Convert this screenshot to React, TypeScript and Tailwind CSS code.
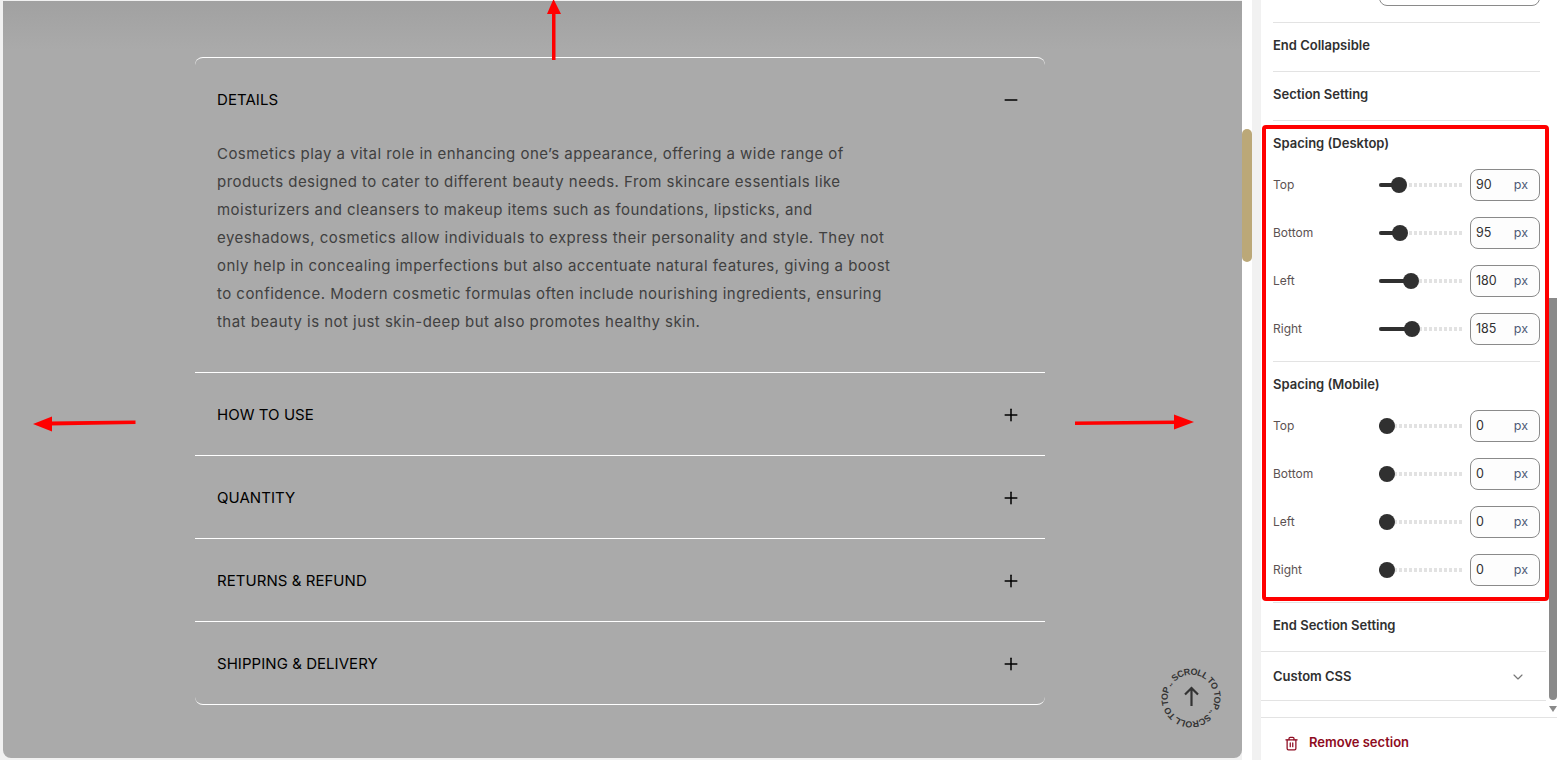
import { ChevronDown, Minus, Plus, Trash2 } from "lucide-react";

const BODY_LINES = [
  "Cosmetics play a vital role in enhancing one’s appearance, offering a wide range of",
  "products designed to cater to different beauty needs. From skincare essentials like",
  "moisturizers and cleansers to makeup items such as foundations, lipsticks, and",
  "eyeshadows, cosmetics allow individuals to express their personality and style. They not",
  "only help in concealing imperfections but also accentuate natural features, giving a boost",
  "to confidence. Modern cosmetic formulas often include nourishing ingredients, ensuring",
  "that beauty is not just skin-deep but also promotes healthy skin.",
];

const COLLAPSED = ["HOW TO USE", "QUANTITY", "RETURNS & REFUND", "SHIPPING & DELIVERY"];

const DESKTOP = [
  { label: "Top", value: 90, pos: 20 },
  { label: "Bottom", value: 95, pos: 21 },
  { label: "Left", value: 180, pos: 32 },
  { label: "Right", value: 185, pos: 33 },
];

const MOBILE = [
  { label: "Top", value: 0, pos: 8 },
  { label: "Bottom", value: 0, pos: 8 },
  { label: "Left", value: 0, pos: 8 },
  { label: "Right", value: 0, pos: 8 },
];

function AccordionRow({ title }: { title: string }) {
  return (
    <div className="flex h-[83px] items-center justify-between border-t border-white pl-[22px] pr-[24px] pt-[2px]">
      <span className="text-[15px] tracking-[0.05px] text-black">{title}</span>
      <Plus className="size-5 text-black" strokeWidth={1.8} />
    </div>
  );
}

function ScrollToTop() {
  return (
    <div className="absolute bottom-[20px] right-[11px] size-[80px]">
      <svg viewBox="0 0 80 80" className="size-full">
        <defs>
          <path
            id="scroll-circle"
            d="M23.74 23.74A23 23 0 1 1 56.26 56.26A23 23 0 1 1 23.74 23.74"
            fill="none"
          />
        </defs>
        <text
          fontSize="9"
          fontWeight="700"
          fill="#333"
          fontFamily="'Liberation Sans', sans-serif"
        >
          <textPath href="#scroll-circle" textLength="143" lengthAdjust="spacing">
            SCROLL TO TOP .. SCROLL TO TOP ..
          </textPath>
        </text>
        <path
          d="M40.500 48V30M34 36.500l6.500-6.500 6.500 6.500"
          fill="none"
          stroke="#333"
          strokeWidth="2.2"
        />
      </svg>
    </div>
  );
}

function Preview() {
  return (
    <main className="relative ml-[3px] mt-px h-[757px] w-[1239px] shrink-0 overflow-hidden rounded-b-lg bg-[#aaaaaa] font-['Inter',sans-serif]">
      <div className="absolute inset-x-0 top-0 h-[50px] bg-gradient-to-b from-[#a1a1a1] to-[#aaaaaa]" />
      <div className="relative ml-[192px] mt-[56px] w-[850px] rounded-lg border-b border-t border-white">
        <div className="flex h-[83px] items-center justify-between pl-[22px] pr-[24px] pt-px">
          <span className="text-[15px] tracking-[0.05px] text-black">DETAILS</span>
          <Minus className="size-5 text-black" strokeWidth={1.8} />
        </div>
        <div className="-mt-px pb-[36px] pl-[22px] text-[15px] leading-[28px] tracking-[0.46px] text-[#404040]">
          {BODY_LINES.map((line) => (
            <p key={line} className="whitespace-nowrap">
              {line}
            </p>
          ))}
        </div>
        {COLLAPSED.map((title) => (
          <AccordionRow key={title} title={title} />
        ))}
      </div>
      <ScrollToTop />
    </main>
  );
}

function SliderRow({
  label,
  value,
  pos,
}: {
  label: string;
  value: number;
  pos: number;
}) {
  return (
    <div className="flex h-12 items-center">
      <span className="w-[106px] text-[12px] text-[#5c5252]">{label}</span>
      <div className="relative h-1 w-[83px]">
        <div className="absolute inset-0 bg-[repeating-linear-gradient(90deg,#e2e2e2_0_3px,transparent_3px_5px)]" />
        <div
          className="absolute inset-y-0 left-0 rounded-full bg-[#303030]"
          style={{ width: pos }}
        />
        <div
          className="absolute top-[-6px] size-4 -translate-x-1/2 rounded-full bg-[#303030]"
          style={{ left: pos }}
        />
      </div>
      <div className="ml-2 flex h-8 w-[70px] items-center justify-between rounded-lg border border-[#8a8a8a] bg-[#fdfdfd] pl-[5px] pr-[11px] text-[12.5px]">
        <span className="text-[#303030]">{value}</span>
        <span className="text-[#4f5b76]">px</span>
      </div>
    </div>
  );
}

function SpacingGroup({
  title,
  rows,
}: {
  title: string;
  rows: typeof DESKTOP;
}) {
  return (
    <div>
      <h3 className="flex h-10 items-end pb-[8px] text-[13px] font-semibold leading-5 text-[#303030]">
        {title}
      </h3>
      {rows.map((row) => (
        <SliderRow key={row.label} {...row} />
      ))}
    </div>
  );
}

function Sidebar() {
  return (
    <aside className="relative ml-[9px] flex h-[760px] w-[296px] shrink-0 flex-col bg-white font-['Inter',sans-serif]">
      <div className="relative h-[718px] overflow-hidden border-b border-[#e3e3e3]">
        <div className="mx-3 w-[267px]">
          <div className="flex h-[23px] items-start justify-end border-b border-[#e3e3e3]">
            <div className="-mt-[10px] h-[16px] w-[161px] rounded-lg border border-[#8a8a8a]" />
          </div>
          <div className="flex h-[49px] items-center border-b border-[#e3e3e3] pb-[2px] text-[13px] font-semibold text-[#303030]">
            End Collapsible
          </div>
          <div className="flex h-[49px] items-center border-b border-[#e3e3e3] pb-[2px] text-[13px] font-semibold text-[#303030]">
            Section Setting
          </div>
          <SpacingGroup title="Spacing (Desktop)" rows={DESKTOP} />
          <div className="mt-[8px] border-t border-[#e3e3e3]" />
          <SpacingGroup title="Spacing (Mobile)" rows={MOBILE} />
          <div className="mt-[8px] border-t border-[#e3e3e3]" />
        </div>
        <div className="w-[285px]">
          <div className="flex h-[49px] items-center border-b border-[#e3e3e3] pb-[3px] pl-3 text-[13px] font-semibold text-[#303030]">
            End Section Setting
          </div>
          <div className="flex h-[49px] items-center justify-between border-b border-[#e3e3e3] pl-3 pr-[20px] pt-px text-[13px] font-semibold text-[#303030]">
            Custom CSS
            <ChevronDown className="size-4 text-[#777]" strokeWidth={1.75} />
          </div>
        </div>

        {/* Scrollbar */}
        <div className="absolute right-0 top-[298px] h-[402px] w-2 rounded-b bg-[#8a8a8a]" />
        <div className="absolute right-0 top-[706px] size-0 border-x-4 border-t-[6px] border-x-transparent border-t-[#8a8a8a]" />
      </div>
      <div className="flex h-[42px] items-center gap-[10px] pl-[23px] pt-[8px] text-[13px] font-semibold text-[#8e0b21]">
        <Trash2 className="size-[15px]" strokeWidth={2} />
        Remove section
      </div>
    </aside>
  );
}

export default function App() {
  return (
    <div className="relative flex h-[760px] w-[1557px] overflow-hidden bg-[#f1f1f1]">
      <Preview />
      <div className="relative h-[760px] w-[10px] shrink-0 bg-white">
        <div className="absolute left-0 top-[129px] h-[133px] w-[10px] rounded-full bg-[#bba878]" />
      </div>
      <Sidebar />

      {/* Annotations */}
      <div className="absolute left-[1262px] top-[125px] h-[476px] w-[287px] rounded-sm border-4 border-[#ff0000]" />
      <svg
        className="pointer-events-none absolute left-0 top-0"
        width="1557"
        height="760"
        viewBox="0 0 1557 760"
      >
        <g fill="#ff0000" stroke="none">
          <path d="M552 60h3.5V13h-3.5z" />
          <path d="M553.5 -1 547 14h14z" />
          <path d="M50 421.5 135.500 420.500v3.500L50 425.500z" />
          <path d="M33 424 52 416.500v15z" />
          <path d="M1075 421.500 1176 420.500v3.500L1075 425z" />
          <path d="M1194 422 1174 414.500v15z" />
        </g>
      </svg>
    </div>
  );
}
